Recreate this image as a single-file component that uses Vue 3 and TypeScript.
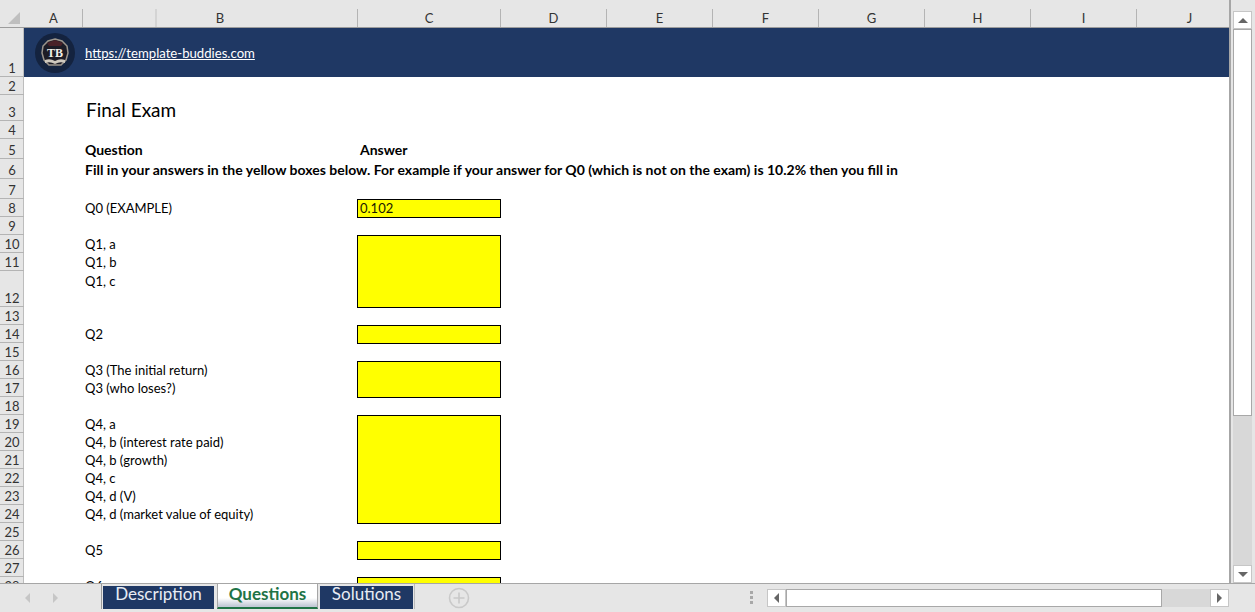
<template>
  <div class="excel">
    <div class="workspace">
      <div class="sheet">
        <div class="col-header">
          <div class="corner"><span class="corner-tri" /></div>
          <div
            v-for="col in columns"
            :key="col.label"
            class="col-cell"
            :class="{ 'col-hidden': col.label === 'B' }"
            :style="{ width: col.width + 'px' }"
          >
            {{ col.label }}
          </div>
        </div>

        <div class="grid" :style="{ gridTemplateRows: rowTemplate }">
          <template v-for="(row, i) in rows" :key="i">
            <div class="row-num" :style="{ gridRow: i + 1 }">{{ i + 1 }}</div>
            <div
              v-if="row.label"
              class="label"
              :class="{ bold: row.bold, top: row.top, wide: row.wide, title: row.title }"
              :style="{ gridRow: i + 1 }"
            >
              {{ row.label }}
            </div>
            <div v-if="row.head" class="label bold head-c" :style="{ gridRow: i + 1 }">{{ row.head }}</div>
          </template>

          <div class="banner">
            <svg class="logo" width="40" height="40" viewBox="0 0 40 40">
              <circle cx="20" cy="20" r="20" fill="#14233f" />
              <path
                d="M20 6 L27 8 L32 13 L33 20 L31 27 L26 32 L14 32 L9 27 L7 20 L8 13 L13 8 Z"
                fill="#1d1c26"
                stroke="#9c958c"
                stroke-width="1.5"
              />
              <path d="M12 10 L20 7 L28 10 L26 13 L14 13 Z" fill="#4a2229" />
              <text x="20" y="24" class="logo-text" text-anchor="middle">TB</text>
              <path d="M10 27 Q15 25 20 28 Q25 25 30 27 L30 30 Q25 28 20 31 Q15 28 10 30 Z" fill="#cfc9be" />
            </svg>
            <a class="link" href="#">https://template-buddies.com</a>
          </div>

          <div
            v-for="box in boxes"
            :key="box.from"
            class="box"
            :style="{ gridRow: box.from + ' / ' + (box.to + 1) }"
          >
            {{ box.value }}
          </div>
        </div>
      </div>

      <div class="vscroll">
        <div class="vbtn"><span class="tri-up" /></div>
        <div class="vthumb" />
        <div class="vtrack" />
        <div class="vbtn"><span class="tri-down" /></div>
      </div>
    </div>

    <div class="bottom">
      <div class="nav-arrows">
        <span class="tri-left light" />
        <span class="tri-right light" />
      </div>
      <div class="tabs">
        <div class="tab navy desc">Description</div>
        <div class="tab active">Questions</div>
        <div class="tab navy sol">Solutions</div>
      </div>
      <svg class="plus" width="22" height="22" viewBox="0 0 22 22">
        <circle cx="11" cy="11" r="9.5" fill="none" stroke="#c9c9c9" stroke-width="1.6" />
        <path d="M11 5.5v11M5.5 11h11" stroke="#c9c9c9" stroke-width="1.6" />
      </svg>
      <div class="dots"><i /><i /><i /></div>
      <div class="hscroll">
        <div class="hbtn"><span class="tri-left" /></div>
        <div class="hthumb" />
        <div class="htrack" />
        <div class="hbtn"><span class="tri-right" /></div>
      </div>
    </div>
  </div>
</template>

<script setup lang="ts">
interface Row {
  h: number
  label?: string
  head?: string
  bold?: boolean
  top?: boolean
  wide?: boolean
  title?: boolean
}

const columns = [
  { label: 'A', width: 58 },
  { label: 'B', width: 275 },
  { label: 'C', width: 143 },
  ...['D', 'E', 'F', 'G', 'H', 'I', 'J'].map((label) => ({ label, width: 106 })),
]

const rows: Row[] = [
  { h: 49 },
  { h: 18 },
  { h: 26, label: 'Final Exam', title: true },
  { h: 18 },
  { h: 20, label: 'Question', head: 'Answer', bold: true },
  { h: 20, label: 'Fill in your answers in the yellow boxes below. For example if your answer for Q0 (which is not on the exam) is 10.2% then you fill in', bold: true, wide: true },
  { h: 20 },
  { h: 18, label: 'Q0 (EXAMPLE)' },
  { h: 18 },
  { h: 18, label: 'Q1, a' },
  { h: 18, label: 'Q1, b' },
  { h: 36, label: 'Q1, c', top: true },
  { h: 18 },
  { h: 18, label: 'Q2' },
  { h: 18 },
  { h: 18, label: 'Q3 (The initial return)' },
  { h: 18, label: 'Q3 (who loses?)' },
  { h: 18 },
  { h: 18, label: 'Q4, a' },
  { h: 18, label: 'Q4, b (interest rate paid)' },
  { h: 18, label: 'Q4, b (growth)' },
  { h: 18, label: 'Q4, c' },
  { h: 18, label: 'Q4, d (V)' },
  { h: 18, label: 'Q4, d (market value of equity)' },
  { h: 18 },
  { h: 18, label: 'Q5' },
  { h: 18 },
  { h: 18, label: 'Q6' },
]

const rowTemplate = rows.map((r) => r.h + 'px').join(' ')

const boxes = [
  { from: 8, to: 8, value: '0.102' },
  { from: 10, to: 12, value: '' },
  { from: 14, to: 14, value: '' },
  { from: 16, to: 17, value: '' },
  { from: 19, to: 24, value: '' },
  { from: 26, to: 26, value: '' },
  { from: 28, to: 28, value: '' },
]
</script>

<style>
html,
body {
  margin: 0;
  background: #e6e6e6;
}
</style>

<style scoped>
.excel {
  width: 1255px;
  height: 612px;
  display: flex;
  flex-direction: column;
  overflow: hidden;
  background: #e6e6e6;
  font-family: Lato, "Liberation Sans", sans-serif;
  font-size: 13px;
  color: #000;
}

.workspace {
  height: 584px;
  flex: none;
  display: flex;
  border-bottom: 1px solid #a6a6a6;
  box-sizing: border-box;
}

.sheet {
  width: 1231px;
  flex: none;
  border-right: 2px solid #a6a6a6;
  box-sizing: border-box;
  overflow: hidden;
  display: flex;
  flex-direction: column;
  background: #fff;
}

.col-header {
  height: 28px;
  flex: none;
  display: flex;
  align-items: flex-end;
  background: #e6e6e6;
  border-bottom: 1px solid #9c9c9c;
  box-sizing: border-box;
  overflow: hidden;
}

.corner {
  width: 25px;
  height: 19px;
  flex: none;
  position: relative;
}

.corner-tri {
  position: absolute;
  left: 8px;
  top: 4px;
  width: 0;
  height: 0;
  border-left: 12px solid transparent;
  border-bottom: 12px solid #bfbfbf;
}

.col-cell {
  height: 18px;
  flex: none;
  box-sizing: border-box;
  border-right: 1px solid #b4b4b4;
  text-align: center;
  line-height: 18px;
  color: #333;
  position: relative;
}

/* hidden column leftover in the header */
.col-hidden::before {
  content: "";
  position: absolute;
  left: 72px;
  top: 0;
  bottom: 0;
  width: 2px;
  background: #d4d4d4;
}

.grid {
  flex: none;
  display: grid;
  grid-template-columns: 24px 58px 275px 143px 1fr;
  align-content: start;
}

.row-num {
  grid-column: 1;
  background: #e6e6e6;
  box-shadow: inset 0 -1px 0 #b4b4b4, inset -1px 0 0 #bdbdbd;
  display: flex;
  align-items: flex-end;
  justify-content: center;
  line-height: 18px;
  color: #333;
}

.label {
  grid-column: 3;
  padding-left: 3px;
  align-self: end;
  line-height: 18px;
  white-space: nowrap;
  z-index: 1;
}

.label.bold {
  font-weight: 700;
  font-size: 14px;
}

.label.top {
  align-self: start;
  padding-top: 1px;
}

.label.wide {
  grid-column: 3 / 6;
}

.label.title {
  font-size: 19px;
  line-height: 22px;
  padding-left: 4px;
}

.head-c {
  grid-column: 4;
}

.banner {
  grid-column: 2 / 6;
  grid-row: 1;
  background: #1f3864;
  display: flex;
  align-items: center;
}

.logo {
  margin-left: 11px;
  flex: none;
}

.logo-text {
  font-family: "Liberation Serif", serif;
  font-size: 12px;
  font-weight: 700;
  fill: #f2efe8;
}

.link {
  margin-left: 10px;
  color: #fff;
  font-size: 13.15px;
  text-decoration: underline;
  white-space: nowrap;
}

.box {
  grid-column: 4;
  background: #ff0;
  border: 1px solid #000;
  box-sizing: border-box;
  margin: 0 -1px -1px 0;
  padding-left: 2px;
  line-height: 16px;
  color: #1a1a00;
}

.vscroll {
  flex: 1;
  display: flex;
  flex-direction: column;
  padding: 11px 3px 0 2px;
  box-sizing: border-box;
}

.vbtn {
  height: 18px;
  flex: none;
  background: #fff;
  border: 1px solid #c6c6c6;
  box-sizing: border-box;
  display: flex;
  align-items: center;
  justify-content: center;
}

.vthumb {
  height: 387px;
  flex: none;
  background: #fff;
  border: 1px solid #a8a8a8;
  box-sizing: border-box;
}

.vtrack {
  flex: 1;
  background: #d8d8d8;
}

.tri-up,
.tri-down,
.tri-left,
.tri-right {
  display: block;
  width: 0;
  height: 0;
}

.tri-up {
  border: 5px solid transparent;
  border-top: 0;
  border-bottom: 5px solid #666;
}

.tri-down {
  border: 5px solid transparent;
  border-bottom: 0;
  border-top: 5px solid #666;
}

.tri-left {
  border: 5px solid transparent;
  border-left: 0;
  border-right: 5px solid #666;
}

.tri-right {
  border: 5px solid transparent;
  border-right: 0;
  border-left: 5px solid #666;
}

.tri-left.light {
  border-right-color: #c6c6c6;
}

.tri-right.light {
  border-left-color: #c6c6c6;
}

.bottom {
  flex: 1;
  display: flex;
  align-items: flex-start;
  position: relative;
}

.nav-arrows {
  width: 101px;
  height: 28px;
  flex: none;
  box-sizing: border-box;
  display: flex;
  align-items: center;
  gap: 23px;
  padding-left: 25px;
}

.tabs {
  display: flex;
  height: 25px;
  border-left: 1px solid #999;
  border-right: 1px solid #bbb;
  padding: 0 1px 0 1px;
  margin-right: 33px;
  margin-top: 0;
}

.tab {
  font-size: 17px;
  line-height: 21px;
  box-sizing: border-box;
  text-align: center;
}

.navy {
  background: #1f3864;
  color: #e8ecf4;
  margin-top: 2px;
  height: 23px;
  line-height: 16px;
}

.desc {
  width: 111px;
  margin-right: 3px;
}

.sol {
  width: 93px;
  margin-left: 2px;
}

.active {
  width: 101px;
  height: 25px;
  background: linear-gradient(#fff 0 14px, #c3c9d6 22px);
  border-left: 1px solid #a6a6a6;
  border-right: 1px solid #a6a6a6;
  border-bottom: 2px solid #217346;
  color: #217346;
  font-weight: 700;
  line-height: 20px;
}

.plus {
  flex: none;
  margin-top: 3px;
}

.dots {
  margin-left: 280px;
  margin-top: 7px;
  display: flex;
  flex-direction: column;
  gap: 2px;
  width: 3px;
  flex: none;
}

.dots i {
  display: block;
  width: 3px;
  height: 3px;
  background: #a8a8a8;
}

.hscroll {
  position: absolute;
  left: 767px;
  top: 5px;
  width: 462px;
  height: 18px;
  display: flex;
  background: #d8d8d8;
}

.hbtn {
  width: 19px;
  flex: none;
  background: #fff;
  border: 1px solid #c6c6c6;
  box-sizing: border-box;
  display: flex;
  align-items: center;
  justify-content: center;
}

.hthumb {
  width: 376px;
  flex: none;
  background: #fff;
  border: 1px solid #a8a8a8;
  box-sizing: border-box;
}

.htrack {
  flex: 1;
}
</style>
